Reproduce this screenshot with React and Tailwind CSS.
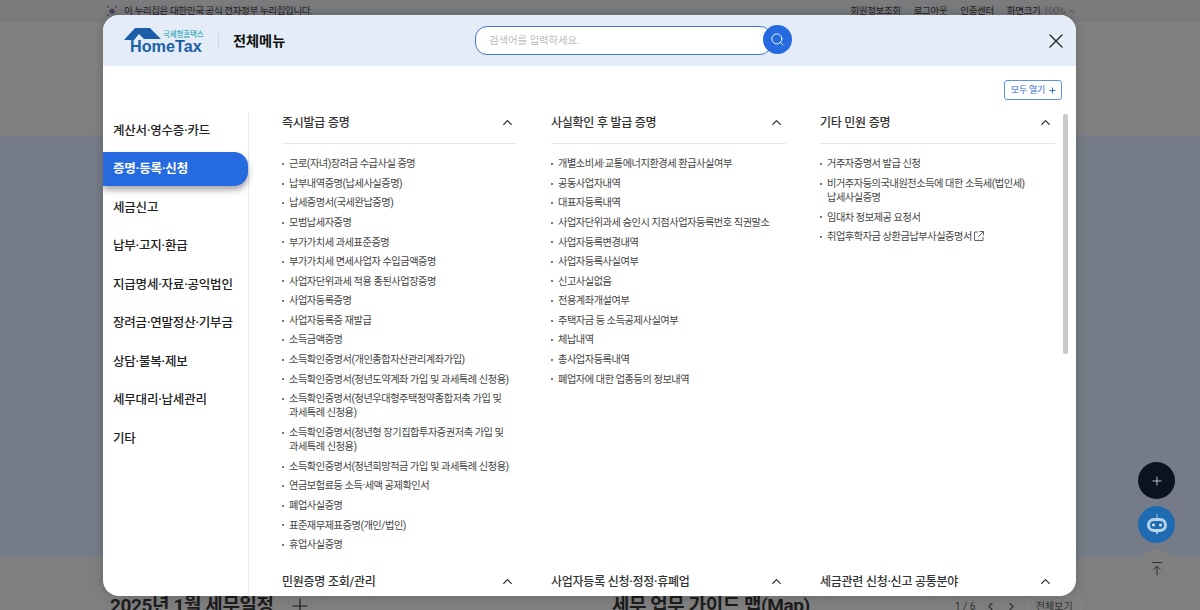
import { ChevronUp, ChevronDown, ChevronLeft, ChevronRight, Plus, Search, X } from "lucide-react";

const sideMenu = [
  "계산서·영수증·카드",
  "증명·등록·신청",
  "세금신고",
  "납부·고지·환급",
  "지급명세·자료·공익법인",
  "장려금·연말정산·기부금",
  "상담·불복·제보",
  "세무대리·납세관리",
  "기타",
];

const sections = [
  {
    title: "즉시발급 증명",
    items: [
      "근로(자녀)장려금 수급사실 증명",
      "납부내역증명(납세사실증명)",
      "납세증명서(국세완납증명)",
      "모범납세자증명",
      "부가가치세 과세표준증명",
      "부가가치세 면세사업자 수입금액증명",
      "사업자단위과세 적용 종된사업장증명",
      "사업자등록증명",
      "사업자등록증 재발급",
      "소득금액증명",
      "소득확인증명서(개인종합자산관리계좌가입)",
      "소득확인증명서(청년도약계좌 가입 및 과세특례 신청용)",
      "소득확인증명서(청년우대형주택청약종합저축 가입 및 과세특례 신청용)",
      "소득확인증명서(청년형 장기집합투자증권저축 가입 및 과세특례 신청용)",
      "소득확인증명서(청년희망적금 가입 및 과세특례 신청용)",
      "연금보험료등 소득·세액 공제확인서",
      "폐업사실증명",
      "표준재무제표증명(개인/법인)",
      "휴업사실증명",
    ],
  },
  {
    title: "사실확인 후 발급 증명",
    items: [
      "개별소비세·교통에너지환경세 환급사실여부",
      "공동사업자내역",
      "대표자등록내역",
      "사업자단위과세 승인시 지점사업자등록번호 직권말소",
      "사업자등록변경내역",
      "사업자등록사실여부",
      "신고사실없음",
      "전용계좌개설여부",
      "주택자금 등 소득공제사실여부",
      "체납내역",
      "총사업자등록내역",
      "폐업자에 대한 업종등의 정보내역",
    ],
  },
  {
    title: "기타 민원 증명",
    items: [
      "거주자증명서 발급 신청",
      "비거주자등의국내원천소득에 대한 소득세(법인세) 납세사실증명",
      "임대차 정보제공 요청서",
      "취업후학자금 상환금납부사실증명서",
    ],
  },
];

const nextSections = ["민원증명 조회/관리", "사업자등록 신청·정정·휴폐업", "세금관련 신청·신고 공통분야"];

function SectionHead({ title }) {
  return (
    <div className="flex h-[19px] items-center justify-between pr-[2px]">
      <span className="mt-[2px] text-[12px] font-medium leading-[19px] tracking-[-0.25px] text-[#333]">{title}</span>
      <ChevronUp size={15} strokeWidth={2.2} className="text-[#333]" />
    </div>
  );
}

function Section({ section }) {
  return (
    <div className="w-[235px]">
      <SectionHead title={section.title} />
      <div className="mt-[11px] h-px bg-[#e8e8e8]" />
      <ul className="mt-[10px] flex flex-col">
        {section.items.map((item) => (
          <li key={item} className="relative break-keep pb-[2.1px] pl-[7px] pt-[3.2px] text-[10.2px] leading-[14.3px] tracking-[-0.45px] text-[#444]">
            <span className="absolute left-0 top-[9px] h-[2px] w-[2px] bg-[#777]" />
            {item}
            {item.startsWith("취업후") && (
              <svg width="10" height="10" viewBox="0 0 10 10" fill="none" stroke="#555" strokeWidth="0.9" className="ml-[2px] inline align-[-1px]">
                <path d="M4 1H.5v8.5H9V6M5.5.5h4v4M9.5.5 4.5 5.5" />
              </svg>
            )}
          </li>
        ))}
      </ul>
    </div>
  );
}

export default function App() {
  return (
    <div
      className="relative h-[610px] w-[1200px] overflow-hidden bg-[#808080] text-[#222]"
      style={{ fontFamily: 'Roboto, "Noto Sans CJK KR", sans-serif' }}
    >
      {/* 뒤쪽 페이지 */}
      <div className="flex h-[22px] items-center justify-between bg-[#7a7b7c] pl-[107px] pr-[123px] text-[9.5px] tracking-[-0.35px] text-[#222]">
        <div className="flex items-center gap-[7px]">
          <svg width="10" height="10" viewBox="0 0 10 10">
            <circle cx="5" cy="5" r="2.6" fill="#5f3a50" />
            <path d="M2.4 5a2.6 2.6 0 0 0 5.2 0z" fill="#37476a" />
            <path d="M0 1.5 2 0M0 8.5 2 10M8 0l2 1.5M8 10l2-1.5" stroke="#333" strokeWidth="1" />
          </svg>
          <span>이 누리집은 대한민국 공식 전자정부 누리집입니다.</span>
        </div>
        <div className="flex items-center gap-[13px]">
          <span>회원정보조회</span>
          <span>로그아웃</span>
          <span>인증센터</span>
          <span className="flex items-center gap-[3px]">
            화면크기 <span className="text-[#555]">100%</span>
            <ChevronDown size={9} className="text-[#444]" />
          </span>
        </div>
      </div>
      <div className="h-[113px] bg-[#808080]" />
      <div className="h-[422px] bg-[#767c87]" />
      <div className="flex h-[53px] items-start bg-[#7f7f7f] pl-[110px] pt-[35px]">
        <span className="w-[178px] flex-none text-[19px] font-bold leading-[28px] tracking-[-0.4px] text-[#1c1c1c]">2025년 1월 세무일정</span>
        <Plus size={24} strokeWidth={1.2} className="mt-[2px] flex-none text-[#1c1c1c]" />
        <span className="ml-[300px] w-[343px] flex-none text-[19px] font-bold leading-[28px] tracking-[-0.45px] text-[#1c1c1c]">세무 업무 가이드 맵(Map)</span>
        <div className="flex items-center gap-[8.5px] pt-[4px] text-[10px] text-[#333]">
          <span>1 / 6</span>
          <ChevronLeft size={13} />
          <ChevronRight size={13} />
          <span className="rounded-full border border-[#888] px-[8px] py-[2px]">전체보기</span>
        </div>
      </div>

      {/* 플로팅 버튼 */}
      <div className="absolute left-[1138px] top-[462px] flex flex-col gap-[7px]">
        <div className="flex h-[37px] w-[37px] items-center justify-center rounded-full bg-[#0b1220]">
          <Plus size={14} strokeWidth={1.5} className="text-[#cfd2d6]" />
        </div>
        <div className="flex h-[37px] w-[37px] items-center justify-center rounded-full bg-[#1d6bb0]">
          <svg width="26" height="26" viewBox="0 0 26 26">
            <path d="M13 2v4" stroke="#a9c8e4" strokeWidth="1" />
            <rect x="3" y="6" width="20" height="14" rx="7" fill="#b9d3ea" />
            <rect x="6" y="9" width="14" height="8" rx="4" fill="#1d6bb0" />
            <circle cx="9.5" cy="13" r="1.5" fill="#d6e5f2" />
            <circle cx="16.5" cy="13" r="1.5" fill="#d6e5f2" />
            <path d="M11.5 20h3L13 22.5z" fill="#b9d3ea" />
          </svg>
        </div>
        <div className="flex h-[38px] w-[38px] flex-col items-center justify-center rounded-full border border-[#858585] bg-[#7f7f7f]">
          <div className="h-px w-[10px] bg-[#333]" />
          <svg width="10" height="11" viewBox="0 0 10 11" className="mt-[2px]" fill="none" stroke="#333" strokeWidth="1">
            <path d="M5 10.5V1M1.5 4.5 5 1l3.5 3.5" />
          </svg>
        </div>
      </div>

      {/* 전체메뉴 모달 */}
      <div className="absolute left-[103px] top-[15px] flex h-[581px] w-[973px] flex-col overflow-hidden rounded-[16px] bg-white shadow-[0_0_12px_rgba(0,0,0,0.2)]">
        <header className="flex h-[51px] flex-none items-center bg-[#e3ecf7] pl-[21px] pr-[8px]">
          <div className="relative h-[28px] w-[79px] flex-none">
            <svg width="40" height="16" viewBox="0 0 40 16" className="absolute left-0 top-0">
              <path d="M0 13 11 1h15l11 11H20l-5-5-5 6z" fill="#1b5fa8" />
            </svg>
            <span className="absolute left-[39px] top-[3px] whitespace-nowrap text-[7.5px] font-medium leading-[10px] tracking-[-0.15px] text-[#33a7b5]">국세청홈택스</span>
            <span
              className="absolute left-[6px] top-[9px] whitespace-nowrap text-[16.2px] font-bold leading-[20px] text-[#1b5fa8]"
              style={{ fontFamily: '"Liberation Sans", sans-serif' }}
            >
              HomeTax
            </span>
          </div>
          <div className="ml-[15px] h-[14px] w-px bg-[#ccd5e0]" />
          <h1 className="ml-[14px] w-[242px] flex-none text-[14.2px] font-bold leading-[20px] text-[#111]">전체메뉴</h1>
          <div className="relative flex h-[29px] w-[297px] flex-none items-center rounded-[12px] border-[1.5px] border-[#3f75d8] bg-white pl-[13px] text-[10.5px] tracking-[-0.15px] text-[#bdbdbd]">
            검색어를 입력하세요.
            <div className="absolute right-[-21px] top-[-2px] flex h-[29px] w-[29px] items-center justify-center rounded-full bg-[#256bdf]">
              <Search size={15} strokeWidth={1.4} className="text-white" />
            </div>
          </div>
          <div className="flex-1" />
          <X size={24} strokeWidth={1.3} className="text-[#222]" />
        </header>

        <div className="flex h-[47px] flex-none items-start justify-end pr-[14px] pt-[14px]">
          <div className="flex h-[20px] w-[58px] items-center justify-center gap-[3px] rounded-[3px] border border-[#5d92e6] pl-[2px] pt-[1px] text-[9px] tracking-[-0.2px] text-[#2f6fdb]">
            모두 열기
            <Plus size={9} strokeWidth={2.6} />
          </div>
        </div>

        <div className="flex min-h-0 flex-1">
          <nav className="w-[146px] flex-none border-r border-[#e8eaf2]">
            <ul className="flex w-[145px] flex-col gap-[4px]">
              {sideMenu.map((menu, i) => (
                <li
                  key={menu}
                  className={
                    i === 1
                      ? "flex h-[34.5px] items-center rounded-r-[14px] bg-[#256bdf] pl-[10px] pt-[2px] text-[12.5px] font-bold tracking-[-0.2px] text-white shadow-[0_4px_6px_rgba(0,0,0,0.35)]"
                      : "flex h-[34.5px] items-center pl-[10px] pt-[2px] text-[12.5px] font-medium tracking-[-0.2px] text-[#222]"
                  }
                >
                  {menu}
                </li>
              ))}
            </ul>
          </nav>

          <div className="relative min-w-0 flex-1 overflow-hidden pl-[33px]">
            <div className="flex gap-[34px]">
              {sections.map((section) => (
                <Section key={section.title} section={section} />
              ))}
            </div>
            <div className="mt-[17px] flex gap-[34px]">
              {nextSections.map((title) => (
                <div key={title} className="w-[235px]">
                  <SectionHead title={title} />
                </div>
              ))}
            </div>
            <div className="absolute left-[814px] top-[1px] h-[240px] w-[5px] rounded-full bg-[#c9c9c9]" />
          </div>
        </div>
      </div>
    </div>
  );
}
